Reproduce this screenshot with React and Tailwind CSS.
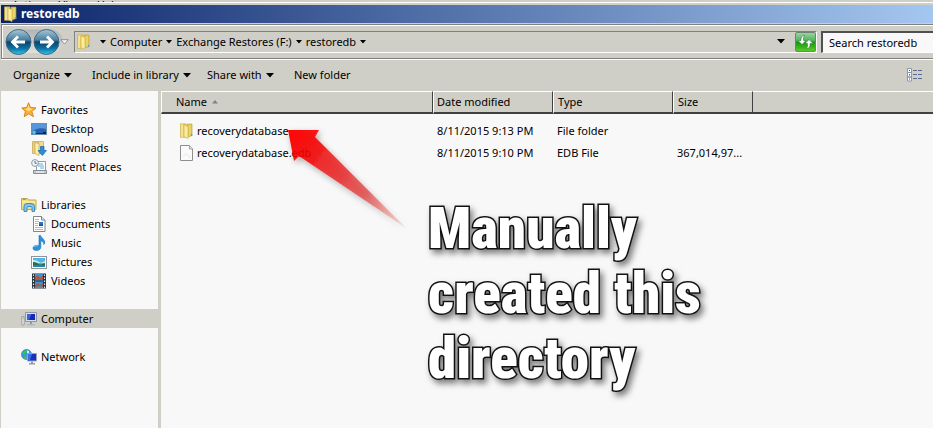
import React from "react";

function FolderIcon() {
  return (
    <svg width="16" height="16" viewBox="0 0 16 16" className="shrink-0" aria-hidden="true">
      <path d="M1.500.800h5.500v13.500H1.500z" fill="#e9cf63" stroke="#c9a83c" strokeWidth="0.600" />
      <path d="M8 1h5v11.500l-5 2z" fill="#e3c655" stroke="#bf9d35" strokeWidth="0.600" />
      <path d="M5 2l4 1.600v12L5 13.600z" fill="#f8ec9e" stroke="#cdb04a" strokeWidth="0.600" />
      <path d="M3 1.500v12.500" stroke="#f7e9a4" strokeWidth="1.500" />
      <path d="M11 2v10.500" stroke="#f2df86" />
      <path d="M12.600 11v2" stroke="#4ba3dc" strokeWidth="1.400" />
    </svg>
  );
}

function FileIcon() {
  return (
    <svg width="16" height="16" viewBox="0 0 16 16" className="shrink-0" aria-hidden="true">
      <path d="M1.500.5h9l3 3.500v11.500h-12z" fill="#fafafa" stroke="#8e8e8e" />
      <path d="M10.500.5v3.500h3" fill="#e6e6e6" stroke="#a2a2a2" />
      <path d="M4 11l3-2 5 4" fill="none" stroke="#f3e4e2" />
    </svg>
  );
}

function StarIcon() {
  return (
    <svg width="16" height="16" viewBox="0 0 16 16" aria-hidden="true">
      <path d="M7.500.8l2 4.700 5.500.4-4.200 3.500 1.700 5.300-4.800-2.900-4.500 2.900 1.200-5.200L.8 6l4.900-.5z" fill="#fbb232" stroke="#d5791c" strokeWidth="0.9" />
      <path d="M7.500 2.800l1.200 3.700 3.500.4-4.700 2-3.500-2 2.500-.5z" fill="#ffe08a" />
    </svg>
  );
}

function DesktopIcon() {
  return (
    <svg width="16" height="16" viewBox="0 0 16 16" aria-hidden="true">
      <rect x="0.500" y="2.500" width="15" height="11" fill="#2662b4" stroke="#6e8cae" />
      <path d="M1 3h14v5C9 6 5 8 1 10z" fill="#5796da" />
      <path d="M1 12h14v1H1z" fill="#1c2d48" />
      <circle cx="3" cy="11.500" r="1.900" fill="#54b8e8" />
      <path d="M2.500 10.500h1v1h-1z" fill="#f4b13c" />
      <path d="M12 11h3v2h-3z" fill="#172236" />
    </svg>
  );
}

function DownloadsIcon() {
  return (
    <svg width="16" height="16" viewBox="0 0 16 16" aria-hidden="true">
      <path d="M1.500 1.500h5v12h-5z" fill="#e8d07a" stroke="#c3a54c" strokeWidth="0.700" />
      <path d="M7 1.500h5.500v12H7z" fill="#f0dc8c" stroke="#c3a54c" strokeWidth="0.700" />
      <path d="M4 2.500l4 1v12l-4-2z" fill="#faf0b6" stroke="#c3a54c" strokeWidth="0.700" />
      <path d="M9.500 6.500h3.500v4h2.500L11.300 15.500 7 10.500h2.500z" fill="#2b8ddb" stroke="#1864a8" strokeWidth="0.700" />
    </svg>
  );
}

function RecentIcon() {
  return (
    <svg width="16" height="16" viewBox="0 0 16 16" aria-hidden="true">
      <path d="M5.500 2.500h9v9h-9z" fill="#fff" stroke="#909aa4" />
      <path d="M7 5h5M7 7h6M9 9h4" stroke="#5caee0" />
      <path d="M2.500 11.500h13v3h-13z" fill="#c7cbd0" stroke="#858b92" />
      <path d="M5 13h8" stroke="#f6f6f6" />
      <circle cx="4" cy="4" r="3.400" fill="#f2f5f8" stroke="#8d9aa8" />
      <path d="M4 2v2.300h1.800" fill="none" stroke="#54616f" strokeWidth="0.900" />
    </svg>
  );
}

function LibrariesIcon() {
  return (
    <svg width="16" height="16" viewBox="0 0 16 16" aria-hidden="true">
      <path d="M.5 3V1.500h6l1 1.500h7.500v9.500H.5z" fill="#f3dd84" stroke="#c5a74c" />
      <path d="M1 5h13.500" stroke="#fff3b4" />
      <path d="M1.800 2.300h3" stroke="#5ba650" />
      <path d="M3 14.500V9.500q0-3 3-3h4q3.500 0 3.500 3v5h-2.500v-4q0-1-1-1H7q-1 0-1 1v4z" fill="#7fc6ea" stroke="#3e8fbd" />
    </svg>
  );
}

function DocumentsIcon() {
  return (
    <svg width="16" height="16" viewBox="0 0 16 16" aria-hidden="true">
      <path d="M2.500.5h8l3.500 3.500v11.500H2.500z" fill="#fff" stroke="#7d858e" />
      <path d="M10.500.5V4H14" fill="#dfe5ea" stroke="#7d858e" />
      <path d="M4 3.500h4M4 5.500h4M4 7.500h3M4 9.500h3M4 11.500h8M4 13.500h8" stroke="#9aa7c4" strokeWidth="0.800" />
      <path d="M8 6h4v4H8z" fill="#2b75c9" />
      <path d="M8 8.500h4V10H8z" fill="#235088" />
    </svg>
  );
}

function MusicIcon() {
  return (
    <svg width="16" height="16" viewBox="0 0 16 16" aria-hidden="true">
      <path d="M8 .5h1.500c.5 2.500 4.500 3.300 4.300 7.500l-1 1.500c0-2-1-3.200-3-3.700v6.700c-.3 2.200-2.500 3-4.500 3s-3.500-1-3.300-2.700c.3-2 3.500-3.200 6-2z" fill="#2692dc" stroke="#1a6fb5" strokeWidth="0.600" />
      <path d="M3 12c.8-1.200 2.500-1.500 4-1" fill="none" stroke="#82ccf6" />
    </svg>
  );
}

function PicturesIcon() {
  return (
    <svg width="16" height="16" viewBox="0 0 16 16" aria-hidden="true">
      <rect x="0.500" y="2.500" width="15" height="12" fill="#fff" stroke="#8f959a" />
      <path d="M2 4h12v9H2z" fill="#51b6e6" />
      <path d="M2 6q4 0 6 2t6-1v2H2z" fill="#c9ecf7" />
      <path d="M2 8q3-.5 5 1.500t7-.5v2H2z" fill="#28704b" />
      <path d="M2 11h12v2H2z" fill="#1f83ad" />
    </svg>
  );
}

function VideosIcon() {
  return (
    <svg width="16" height="16" viewBox="0 0 16 16" aria-hidden="true">
      <path d="M1 .5h14v15H1z" fill="#26303a" />
      <path d="M4 1h8v6.500H4zM4 8.500h8V15H4z" fill="#3f94cf" />
      <path d="M4 4l3-2 2 3 3-3v5H4zM4 12l3-2 2 2 3-2v4l-4-1-4 1z" fill="#b05740" />
      <path d="M2.500 1.500v14M13.500 1.500v14" stroke="#e3e9ee" strokeWidth="1.200" strokeDasharray="1.500 1.500" />
    </svg>
  );
}

function ComputerIcon() {
  return (
    <svg width="16" height="16" viewBox="0 0 16 16" aria-hidden="true">
      <path d="M4.500 1.500h11v9h-11z" fill="#d9dfe6" stroke="#8f98a2" />
      <path d="M6 3h8v6H6z" fill="#1428b4" />
      <path d="M6 3h4.500L8 9H6z" fill="#3c62e2" />
      <path d="M9 11h2v2H9z" fill="#8f98a2" />
      <path d="M6 13h8v1.500H6z" fill="#b4bac2" />
      <path d="M.8 5.500h2.400v8.500H.8z" fill="#e3e6ea" stroke="#868e96" strokeWidth="0.700" />
      <path d="M1.500 7h1" stroke="#4ab34a" />
    </svg>
  );
}

function NetworkIcon() {
  return (
    <svg width="16" height="16" viewBox="0 0 16 16" aria-hidden="true">
      <circle cx="5.500" cy="5.500" r="5" fill="#2f9be0" stroke="#2a76b4" strokeWidth="0.700" />
      <path d="M2 2.500q3-2 5-1L5 4 3 5.500 1 5zM3 7l3 1-1 2.500Q2 9.500 3 7z" fill="#4cba52" />
      <path d="M6 1.500l2 .5v2L6 4z" fill="#d6f2ff" />
      <path d="M6.500 4.500h9v7.500h-9z" fill="#1830c0" stroke="#9aa4b2" />
      <path d="M7 5h4l-2 6.500H7z" fill="#4268e6" />
      <path d="M10 12.500h2v1.500h-2zM8 14h6v1.500H8z" fill="#949ca8" />
    </svg>
  );
}

function ViewIcon() {
  return (
    <svg width="16" height="14" viewBox="0 0 16 14" aria-hidden="true">
      <path d="M.5.500h4v4h-4zM.5 4.500h4v4.500h-4zM.5 9h4v4h-4z" fill="#fff" stroke="#8797b5" />
      <path d="M2 2h1v1H2zM2 10.500h1v1H2z" fill="#2c4d8e" />
      <path d="M2 6h1v1.500H2z" fill="#c2382d" />
      <path d="M6 2.500h4M11 2.500h4M6 6.500h4M11 6.500h4M6 10.500h4M11 10.500h4" stroke="#5a6b92" />
    </svg>
  );
}

function RefreshIcon() {
  return (
    <svg width="21" height="20" viewBox="0 0 21 20" aria-hidden="true">
      <defs>
        <linearGradient id="refresh" x1="0" y1="0" x2="0" y2="1">
          <stop offset="0" stopColor="#9fd6a5" />
          <stop offset="0.450" stopColor="#4caf57" />
          <stop offset="0.500" stopColor="#109412" />
          <stop offset="1" stopColor="#5ecf26" />
        </linearGradient>
      </defs>
      <rect x="0.500" y="0.500" width="20" height="19" rx="1.500" fill="url(#refresh)" stroke="#6f8573" />
      <path d="M9.500 3Q5.500 4 6 8.500H3L7 12.500 11 8.500H8.500Q8 5.500 9.500 3z" fill="#fff" stroke="#3e7c42" strokeWidth="0.600" />
      <path d="M11.500 17Q15.500 16 15 11.500h3L14 7.500 10 11.500h2.500Q13 14.500 11.500 17z" fill="#fff" stroke="#3e7c42" strokeWidth="0.600" />
    </svg>
  );
}

function NavButtons() {
  return (
    <svg width="64" height="28" viewBox="0 0 64 28" aria-hidden="true">
      <defs>
        <linearGradient id="orb" x1="0" y1="0" x2="0" y2="1">
          <stop offset="0" stopColor="#a9c6d6" />
          <stop offset="0.420" stopColor="#477f9f" />
          <stop offset="0.500" stopColor="#0b4469" />
          <stop offset="0.750" stopColor="#0b71a3" />
          <stop offset="1" stopColor="#35c7ee" />
        </linearGradient>
        <linearGradient id="tray" x1="0" y1="0" x2="0" y2="1">
          <stop offset="0" stopColor="#b2b3b3" />
          <stop offset="1" stopColor="#e0e0dd" />
        </linearGradient>
      </defs>
      <path d="M14 1.500h30c8 0 13 5 14 9q-1 13-12 14.500H14z" fill="url(#tray)" />
      <circle cx="13.500" cy="14" r="12.500" fill="url(#orb)" stroke="#416985" />
      <circle cx="41.500" cy="14" r="12.500" fill="url(#orb)" stroke="#416985" />
      <path d="M20 14H7.500M13 8.500L7.500 14l5.500 5.500M35 14h12.500M42 8.500l5.500 5.500-5.500 5.500" fill="none" stroke="#fff" strokeWidth="2.800" />
    </svg>
  );
}

function Caret({ small }) {
  return small ? (
    <svg width="6" height="4" viewBox="0 0 6 4" className="shrink-0" aria-hidden="true">
      <path d="M0 0h6L3 3.500z" fill="#000" />
    </svg>
  ) : (
    <svg width="8" height="5" viewBox="0 0 8 5" className="shrink-0" aria-hidden="true">
      <path d="M0 0h8L4 4.500z" fill="#000" />
    </svg>
  );
}

const groups = [
  {
    label: "Favorites",
    Icon: StarIcon,
    items: [
      ["Desktop", DesktopIcon],
      ["Downloads", DownloadsIcon],
      ["Recent Places", RecentIcon],
    ],
  },
  {
    label: "Libraries",
    Icon: LibrariesIcon,
    items: [
      ["Documents", DocumentsIcon],
      ["Music", MusicIcon],
      ["Pictures", PicturesIcon],
      ["Videos", VideosIcon],
    ],
  },
  { label: "Computer", Icon: ComputerIcon, items: [], selected: true },
  { label: "Network", Icon: NetworkIcon, items: [] },
];

const files = [
  { name: "recoverydatabase", date: "8/11/2015 9:13 PM", type: "File folder", size: "", Icon: FolderIcon },
  { name: "recoverydatabase.edb", date: "8/11/2015 9:10 PM", type: "EDB File", size: "367,014,97...", Icon: FileIcon },
];

const headCell =
  "h-[23px] border-t border-l border-t-white border-l-white border-r border-r-[#404040] border-b-2 border-b-[#404040] p-0 text-left font-normal";

function Sidebar() {
  return (
    <nav aria-label="Folders" className="flex w-[157px] shrink-0 flex-col gap-[19px] bg-[#f8f8f8] pt-[9px]">
      {groups.map(({ label, Icon, items, selected }) => (
        <ul key={label}>
          <li>
            <a href="#" className={selected ? "flex h-[19px] items-center gap-1 bg-[#d0cfc7] pl-5" : "flex h-[19px] items-center gap-1 pl-5"}>
              <Icon />
              {label}
            </a>
          </li>
          {items.map(([name, ItemIcon]) => (
            <li key={name}>
              <a href="#" className="flex h-[19px] items-center gap-1 pl-[30px]">
                <ItemIcon />
                {name}
              </a>
            </li>
          ))}
        </ul>
      ))}
    </nav>
  );
}

function Annotation() {
  return (
    <>
      <svg width="140" height="124" viewBox="0 0 140 124" className="pointer-events-none absolute top-[30px] left-[120px]" aria-hidden="true">
        <defs>
          <linearGradient id="pointer" gradientUnits="userSpaceOnUse" x1="8" y1="10" x2="126" y2="108">
            <stop offset="0" stopColor="#ff0000" stopOpacity="0.980" />
            <stop offset="0.200" stopColor="#f60404" stopOpacity="0.860" />
            <stop offset="0.650" stopColor="#e02020" stopOpacity="0.620" />
            <stop offset="1" stopColor="#e85050" stopOpacity="0.150" />
          </linearGradient>
          <filter id="soft" x="-20%" y="-20%" width="140%" height="140%">
            <feDropShadow dx="2" dy="3" stdDeviation="3" floodColor="#000" floodOpacity="0.350" />
          </filter>
        </defs>
        <path d="M7 9h31l-4 7 91 91L18 35l-5 5z" fill="url(#pointer)" filter="url(#soft)" />
      </svg>
      <p className="pointer-events-none absolute top-[105px] left-[267px] w-72 font-['Roboto_Condensed','Roboto',sans-serif] text-[57px] leading-[65px] font-black text-white [-webkit-text-stroke:3px_#111] [paint-order:stroke_fill] [filter:drop-shadow(3px_4px_3px_rgba(0,0,0,0.5))]">
        Manually
        <br />
        created this
        <br />
        directory
      </p>
    </>
  );
}

export default function App() {
  return (
    <div className="flex min-h-screen flex-col overflow-hidden bg-[#d0cfc7] font-['Noto_Sans','Open_Sans',sans-serif] text-[11px] leading-4 text-black">
      <div className="flex h-[2px] gap-[14px] overflow-hidden pl-3 leading-[10px]">
        <span>Action</span>
        <span>View</span>
        <span>Help</span>
      </div>
      <div className="flex grow flex-col border-t border-white pt-[2px] pl-px">
        <header className="flex h-[18px] items-center gap-[2px] bg-linear-to-r/srgb from-[#0a246a] to-[#a4c7f0] pl-[2px]">
          <FolderIcon />
          <h1 className="text-xs leading-4 font-bold text-white">restoredb</h1>
        </header>

        <div className="mt-px flex h-[35px] items-center border-y border-l border-[#808080] shadow-[inset_0_1px_0_#fff,inset_1px_0_0_#fff,0_1px_0_#fff]">
          <div className="relative ml-[3px] flex shrink-0">
            <NavButtons />
            <button type="button" aria-label="Back" className="absolute inset-y-0 left-0 w-7 rounded-full" />
            <button type="button" aria-label="Forward" className="absolute inset-y-0 left-7 w-7 rounded-full" />
            <button type="button" aria-label="Recent pages" className="absolute inset-y-0 right-0 flex w-[9px] items-center">
              <svg width="9" height="6" viewBox="0 0 9 6" aria-hidden="true">
                <path d="M.7.700h7.600L4.500 5z" fill="#f4f4f4" stroke="#808890" strokeWidth="0.900" />
              </svg>
            </button>
          </div>
          <div className="ml-[5px] flex h-[22px] min-w-0 grow items-center border border-t-[#808080] border-r-white border-b-white border-l-[#808080] pl-px">
            <FolderIcon />
            <ol className="ml-2 flex grow items-center gap-1">
              <li className="flex items-center gap-1">
                <Caret small />
                <a href="#">Computer</a>
              </li>
              <li className="flex items-center gap-1">
                <Caret small />
                <a href="#">Exchange Restores (F:)</a>
              </li>
              <li className="flex items-center gap-1">
                <Caret small />
                <a href="#">restoredb</a>
                <Caret small />
              </li>
            </ol>
            <button type="button" aria-label="Previous locations" className="flex h-5 w-[18px] items-center">
              <Caret />
            </button>
            <button type="button" aria-label="Refresh">
              <RefreshIcon />
            </button>
          </div>
          <input
            type="text"
            aria-label="Search restoredb"
            placeholder="Search restoredb"
            className="ml-1 h-[22px] w-28 shrink-0 border-t-2 border-l-2 border-b border-t-[#505050] border-l-[#505050] border-b-white bg-[#f8f8f8] pl-[6px] text-[11px] placeholder:text-black"
          />
        </div>

        <div className="flex h-8 items-center pr-[10px] pl-3">
          <button type="button" className="flex w-[79px] items-center gap-1">
            Organize <Caret />
          </button>
          <button type="button" className="flex w-[115px] items-center gap-1">
            Include in library <Caret />
          </button>
          <button type="button" className="flex w-[87px] items-center gap-1">
            Share with <Caret />
          </button>
          <button type="button">New folder</button>
          <button type="button" aria-label="Change your view" className="ml-auto">
            <ViewIcon />
          </button>
        </div>

        <div className="flex grow">
          <Sidebar />
          <main className="relative ml-[3px] min-w-0 grow bg-[#f8f8f8]">
            <table className="w-full table-fixed border-separate border-spacing-0">
              <colgroup>
                <col className="w-[272px]" />
                <col className="w-[120px]" />
                <col className="w-[120px]" />
                <col className="w-20" />
                <col />
              </colgroup>
              <thead className="bg-[#d0cfc7]">
                <tr>
                  <th className={headCell}>
                    <span className="flex items-center gap-[5px] pl-[14px]">
                      Name
                      <svg width="6" height="4" viewBox="0 0 6 4" aria-hidden="true">
                        <path d="M3 0l3 3.500H0z" fill="#808080" />
                      </svg>
                    </span>
                  </th>
                  <th className={headCell}>
                    <span className="pl-[3px]">Date modified</span>
                  </th>
                  <th className={headCell}>
                    <span className="pl-1">Type</span>
                  </th>
                  <th className={headCell}>
                    <span className="pl-1">Size</span>
                  </th>
                  <td className="border-t border-b-2 border-t-white border-b-[#404040]" />
                </tr>
              </thead>
              <tbody className="before:block before:h-[6px] before:content-['']">
                {files.map(({ name, date, type, size, Icon }) => (
                  <tr key={name} className="h-[22px]">
                    <td className="p-0 pl-[18px]">
                      <span className="flex items-center gap-[2px]">
                        <Icon />
                        {name}
                      </span>
                    </td>
                    <td className="p-0 pl-1 whitespace-nowrap">{date}</td>
                    <td className="p-0 pl-1">{type}</td>
                    <td className="p-0 pl-1 whitespace-nowrap">{size}</td>
                    <td className="p-0" />
                  </tr>
                ))}
              </tbody>
            </table>
            <Annotation />
          </main>
        </div>
      </div>
    </div>
  );
}
